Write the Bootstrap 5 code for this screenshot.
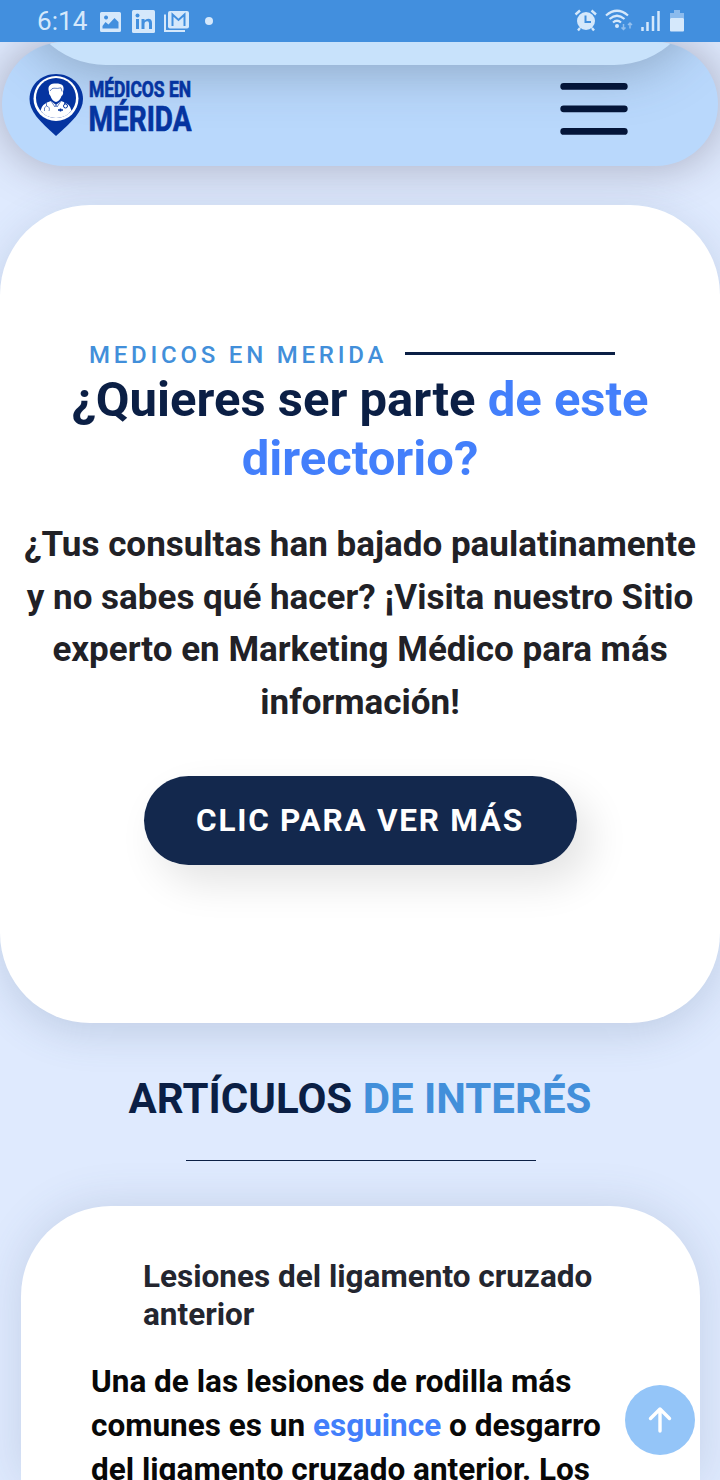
<!DOCTYPE html>
<html lang="es">
<head>
<meta charset="utf-8">
<meta name="viewport" content="width=device-width, initial-scale=1">
<title>Médicos en Mérida</title>
<link href="https://cdn.jsdelivr.net/npm/bootstrap@5.3.0/dist/css/bootstrap.min.css" rel="stylesheet">
<style>
body{font-family:Roboto,"Liberation Sans",sans-serif;background:#dfeafe;color:#0b1f45;height:1480px;overflow:hidden}
.status-bar{height:42px;background:#428fde;color:#d5e8fb;padding:0 34px 0 37px;z-index:5}
.clock{font-size:26px;line-height:44px;width:63px;letter-spacing:.1px}
.site-nav{height:124px;margin:0 2px;border-radius:62px;background:#b9d8fc;padding:0 90px 0 26px;box-shadow:0 0 40px 5px rgba(85,80,100,.34)}
.nav-clip{position:absolute;inset:0;border-radius:62px;overflow:hidden}
.top-pill{position:absolute;left:18px;right:18px;top:-157px;height:180px;border-radius:86px;background:#c8e2fb;box-shadow:0 8px 50px rgba(70,85,105,.36)}
.promo{margin-top:39px;height:818px;border-radius:90px;background:#fff;padding-top:135px;box-shadow:0 10px 40px rgba(70,95,130,.2)}
.eyebrow{font-size:24px;line-height:30px;font-weight:500;color:#428fda;letter-spacing:3.77px;margin-left:89px}
.rule-dark{width:210px;height:3px;background:#0b1f45;margin-left:18px;margin-top:-3px}
.promo h2{font-size:49px;line-height:59px;font-weight:700;margin:0}
.accent{color:#437ffb}
.promo-copy{font-size:35px;line-height:52.6px;font-weight:700;color:#212126;margin-top:31px}
.cta{width:433px;height:89px;border-radius:45px;background:#13284d;color:#fff;font-size:31.5px;font-weight:700;letter-spacing:1.75px;margin-top:47px;box-shadow:14px 18px 40px rgba(0,0,0,.11)}
.articles h2{font-size:42px;line-height:50px;font-weight:700;margin:51px 0 0}
.articles h2 span{color:#428fda}
.rule-thin{width:350px;height:1px;background:#0b1f45;margin:36px auto 0;position:relative;left:1px}
.article{margin:45px 20px 0 21px;height:274px;border-radius:90px 90px 0 0;background:#fff;padding:52px 70px 0;overflow:hidden;box-shadow:0 0 45px rgba(70,95,130,.18)}
.article h3{font-size:31.5px;line-height:38px;font-weight:700;color:#24262f;margin:0 0 0 52px;white-space:nowrap}
.article p{font-size:31.5px;line-height:44px;font-weight:700;color:#080808;margin:26px 0 0;white-space:nowrap}
.to-top{left:625px;top:1385px;width:70px;height:70px;background:#94c5f8}
</style>
</head>
<body>
<header>
  <div class="status-bar d-flex align-items-center justify-content-between position-relative">
    <div class="d-flex align-items-center">
      <span class="clock">6:14</span>
      <svg width="118" height="42" viewBox="100 0 118 42" fill="#d5e8fb">
        <path fill-rule="evenodd" d="M101.500 12H119.500Q121 12 121 13.500V30.500Q121 32 119.500 32H101.500Q100 32 100 30.500V13.500Q100 12 101.500 12ZM102.500 28.500H118.500V22L114.500 18L108.500 24.500L105.500 22L102.500 26ZM106 15.500A2 2 0 1 0 106.100 15.500Z"/>
        <rect x="132" y="10" width="23" height="23" rx="1.500"/>
        <g fill="#428fde"><circle cx="137.500" cy="15.500" r="2"/><path d="M136 19H139V29H136ZM141.500 19H144.500V20.500Q146 18.700 148.300 18.700Q152 18.700 152 23V29H149V23.500Q149 21.300 147.300 21.300Q144.500 21.300 144.500 24V29H141.500Z"/></g>
        <path d="M165 14.500V31H185" fill="none" stroke="#d5e8fb" stroke-width="2"/>
        <rect x="168" y="11" width="21" height="17.500" rx="2"/>
        <path d="M172.500 26V14.500L178.500 20L184.500 14.500V26" fill="none" stroke="#428fde" stroke-width="2"/>
        <circle cx="209" cy="21" r="4"/>
      </svg>
    </div>
    <svg width="113" height="42" viewBox="573 0 113 42" fill="none" stroke="#d5e8fb" stroke-width="2">
      <circle cx="586" cy="21" r="9" fill="#d5e8fb" stroke="none"/><path d="M575.500 14.500L580 10.500M596 14.500L591.500 10.500M580 28L578 30.500M592 28L594 30.500" stroke-width="2.400"/><path d="M585.500 15.500V22H591" stroke="#428fde"/>
      <path d="M606 15.500Q617 6 628 15.500M609.500 19Q617 12.500 624.500 19M613 22.500Q617 19 621 22.500" stroke-width="2.200"/><circle cx="617" cy="26" r="2" fill="#d5e8fb" stroke="none"/>
      <path d="M623.500 24V29.500M621.500 27.500L623.500 29.500L625.500 27.500M630 28.500V23M628 25L630 23L632 25" stroke-width="1.500" opacity=".55"/>
      <path d="M642.500 27V31M647.500 22V31M653 16V31M658.500 11V31" stroke-width="2.500"/>
      <rect x="670" y="13" width="14" height="5" fill="#d5e8fb" stroke="none" opacity=".5"/><rect x="674" y="10" width="6" height="3" fill="#d5e8fb" stroke="none" opacity=".5"/><rect x="670" y="18" width="14" height="13.500" rx="1" fill="#d5e8fb" stroke="none"/>
    </svg>
  </div>
  <nav class="site-nav position-relative d-flex align-items-center justify-content-between">
    <div class="nav-clip"><div class="top-pill"></div></div>
    <svg class="position-relative overflow-visible" width="168" height="70" viewBox="28 69 168 70" aria-label="Médicos en Mérida">
      <path d="M56 74C41 74 29.500 85 29.500 99C29.500 111 39 121 56 136C73 121 83 111 83 99C83 85 71 74 56 74Z" fill="#0534a0"/>
      <circle cx="56" cy="98.500" r="22.500" fill="#fff"/><circle cx="56" cy="98" r="20" fill="#0534a0"/>
      <path d="M40.500 110.500Q42 103.500 51 101L56 105L61 101Q70 103.500 71.500 110.500Q66 118 56 118Q46 118 40.500 110.500Z" fill="#fff"/>
      <path d="M49 92C47 85 51 83.500 56 83.500C62 83.500 65 85.500 63 92C63.500 94 62.500 95.500 61.500 96Q60 101 56 102Q52 101 50.500 96Q48.500 94.500 49 92Z" fill="#fff"/>
      <path d="M50 91Q52 87.800 54 88.200Q58 88.800 61 87.800L62 91.500" fill="none" stroke="#0534a0" stroke-width=".6"/>
      <path d="M51 101L55 107L56 105L57 107L61 101M46.500 103V106Q43.500 107 44.500 111M46.500 106Q50.500 107 49 111" fill="none" stroke="#0534a0" stroke-width=".6"/>
      <circle cx="65.500" cy="106" r="2" fill="none" stroke="#0534a0"/><path d="M65 101V104M58 110H63M60.500 108.500V111.500" stroke="#0534a0" stroke-width="1.500"/>
      <g fill="#0534a0" stroke="#0534a0" stroke-width=".7" font-family="Roboto, sans-serif" font-weight="700">
        <text x="89" y="97.300" font-size="22" textLength="102" lengthAdjust="spacingAndGlyphs">MÉDICOS EN</text>
        <text x="88.500" y="131" font-size="34.500" textLength="103" lengthAdjust="spacingAndGlyphs">MÉRIDA</text>
      </g>
    </svg>
    <svg class="position-relative mt-2" width="68" height="54" viewBox="0 0 68 54" stroke="#041538" stroke-width="6.800" stroke-linecap="round"><path d="M3.700 5.400H64.300M3.700 27.800H64.300M3.700 50.400H64.300"/></svg>
  </nav>
</header>
<main>
  <section class="promo position-relative text-center">
    <div class="d-flex align-items-center"><span class="eyebrow text-nowrap">MEDICOS EN MERIDA</span><span class="rule-dark"></span></div>
    <h2>¿Quieres ser parte <span class="accent">de este<br>directorio?</span></h2>
    <p class="promo-copy mb-0">¿Tus consultas han bajado paulatinamente<br>y no sabes qué hacer? ¡Visita nuestro Sitio<br>experto en Marketing Médico para más<br>información!</p>
    <a href="#" class="cta d-inline-flex align-items-center justify-content-center text-decoration-none">CLIC PARA VER MÁS</a>
  </section>
  <section class="articles">
    <h2 class="text-center position-relative">ARTÍCULOS <span>DE INTERÉS</span></h2>
    <div class="rule-thin"></div>
    <article class="article">
      <h3>Lesiones del ligamento cruzado<br>anterior</h3>
      <p>Una de las lesiones de rodilla más<br>comunes es un <span class="accent">esguince</span> o desgarro<br>del ligamento cruzado anterior. Los</p>
    </article>
  </section>
</main>
<a href="#" class="to-top position-fixed rounded-circle d-flex align-items-center justify-content-center" aria-label="Subir">
  <svg width="24" height="28" viewBox="0 0 24 28" fill="none" stroke="#fff" stroke-width="3.400" stroke-linecap="round" stroke-linejoin="round"><path d="M12 25V3M2.500 12.500L12 3L21.500 12.500"/></svg>
</a>
<script src="https://cdn.jsdelivr.net/npm/bootstrap@5.3.0/dist/js/bootstrap.bundle.min.js"></script>
</body>
</html>
